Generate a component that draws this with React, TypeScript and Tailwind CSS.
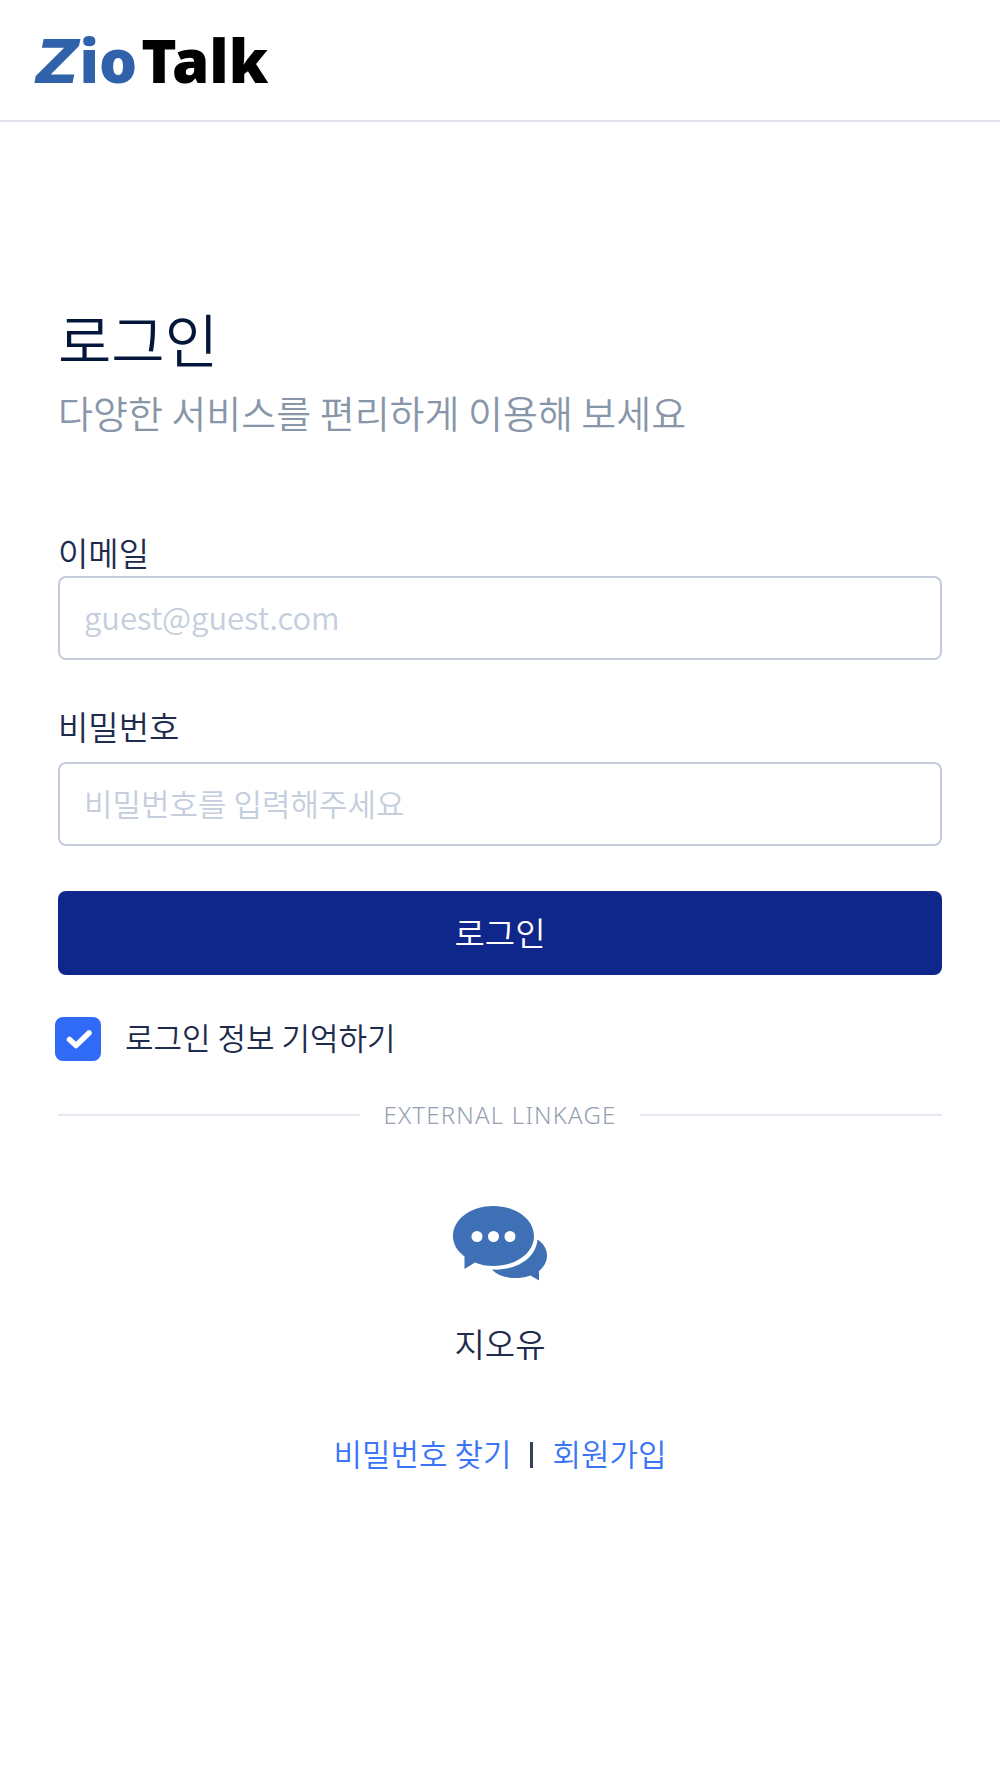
import React, { useState } from 'react';
import clsx from 'clsx';

function Logo() {
  return (
    <a
      href="#"
      aria-label="ZioTalk"
      className="flex items-baseline gap-1 font-['Noto_Sans','Open_Sans',sans-serif] text-[60px] leading-[68px] font-black"
    >
      <span className="text-[#2f62ab]">
        <span className="font-['DejaVu_Sans',sans-serif] font-bold italic">Z</span>io
      </span>
      <span className="text-black">Talk</span>
    </a>
  );
}

function ChatIcon() {
  return (
    <svg width="94" height="75" viewBox="0 0 94 75" fill="#3f70b5" aria-hidden="true">
      <path d="M40.5 0C63 0 81 13 81 30S63 60 40.5 60C34 60 27.500 59 22 56.500L11.500 63V50.500C4 45 0 38 0 30C0 13 18 0 40.500 0Z" />
      <path d="M84.500 33.500C90.500 37.500 94 43 94 49.500C94 55.500 91 61 86 65V74.500L77.500 69.500C72 71.500 66.500 72 61.500 72C52 72 44 69 39 63.500C62 65 83 53 84.500 33.500Z" />
      <g fill="#fff">
        <circle cx="24" cy="30.500" r="5.500" />
        <circle cx="40.500" cy="30.500" r="5.500" />
        <circle cx="57" cy="30.500" r="5.500" />
      </g>
    </svg>
  );
}

interface FieldProps {
  id: string;
  label: string;
  type: string;
  placeholder: string;
  className?: string;
}

function Field({ id, label, type, placeholder, className }: FieldProps) {
  return (
    <div className={clsx('flex flex-col', className)}>
      <label htmlFor={id} className="text-[33px] leading-[44px] text-[#1e2b4d]">
        {label}
      </label>
      <input
        id={id}
        type={type}
        placeholder={placeholder}
        className="h-[84px] w-full rounded-lg border-2 border-[#c2ccdb] bg-white px-6 pb-1 text-[31px] text-[#1e2b4d] placeholder:text-[#c5cedd] outline-none focus:border-[#2f6bf6]"
      />
    </div>
  );
}

export default function App() {
  const [remember, setRemember] = useState(true);

  return (
    <div className="min-h-screen bg-white font-['Noto_Sans_CJK_KR',sans-serif] font-[350]">
      <header className="border-b-2 border-[#e1e5f0] px-9 pt-[26px] pb-6">
        <Logo />
      </header>

      <main className="px-[58px] pt-[176px] pb-16">
        <h1 className="text-[58px] leading-[80px] text-[#04163a]">로그인</h1>
        <p className="text-[38px] leading-[68px] text-[#8896a9]">다양한 서비스를 편리하게 이용해 보세요</p>

        <form onSubmit={(e) => e.preventDefault()}>
          <Field id="email" label="이메일" type="email" placeholder="guest@guest.com" className="mt-[84px] gap-[2px]" />
          <Field
            id="password"
            label="비밀번호"
            type="password"
            placeholder="비밀번호를 입력해주세요"
            className="mt-11 gap-[14px]"
          />

          <button
            type="submit"
            className="mt-[45px] h-[84px] w-full rounded-lg bg-[#0f268a] text-[33px] text-white hover:bg-[#0c1f72]"
          >
            로그인
          </button>

          <div className="-ml-[3px] mt-[38px] flex items-center gap-6">
            <span className="relative mt-1 flex h-11 w-[46px]">
              <input
                id="remember"
                type="checkbox"
                checked={remember}
                onChange={(e) => setRemember(e.target.checked)}
                className="size-full appearance-none rounded-lg border-2 border-[#c2ccdb] checked:border-[#2f6bf6] checked:bg-[#2f6bf6]"
              />
              {remember && (
                <svg viewBox="0 0 46 44" className="pointer-events-none absolute inset-0" aria-hidden="true">
                  <path
                    d="M14.500 22.500L21 28.500L34 16"
                    fill="none"
                    stroke="#fff"
                    strokeWidth="5.500"
                    strokeLinecap="round"
                    strokeLinejoin="round"
                  />
                </svg>
              )}
            </span>
            <label htmlFor="remember" className="text-[31px] leading-[44px] text-[#1e2b4d]">
              로그인 정보 기억하기
            </label>
          </div>
        </form>

        {/* Divider */}
        <div className="mt-[38px] flex items-center gap-6">
          <div className="h-[2px] flex-1 bg-[#e4e8f3]" />
          <span className="font-['Noto_Sans',sans-serif] text-[24px] leading-8 tracking-wider text-[#94a0b2]">
            EXTERNAL LINKAGE
          </span>
          <div className="h-[2px] flex-1 bg-[#e4e8f3]" />
        </div>

        <div className="mt-[75px] flex justify-center">
          <a href="#" className="flex flex-col items-center gap-10 text-[33px] leading-[44px] text-[#1e2b4d]">
            <ChatIcon />
            지오유
          </a>
        </div>

        <nav className="mt-[66px] flex items-center justify-center gap-[19px] text-[31px] leading-[44px] text-[#3b74f7]">
          <a href="#">비밀번호 찾기</a>
          <span className="mt-1 h-[26px] w-[3px] bg-[#33415a]" />
          <a href="#">회원가입</a>
        </nav>
      </main>
    </div>
  );
}
